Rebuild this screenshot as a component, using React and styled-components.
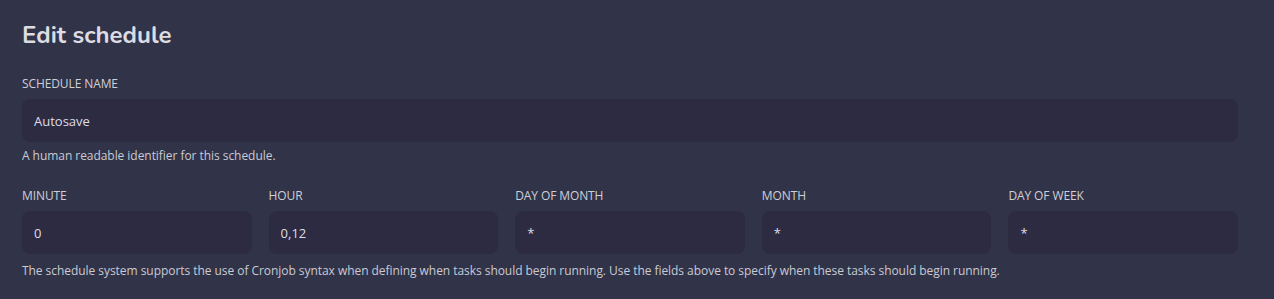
import React, { useState } from 'react';
import styled, { createGlobalStyle } from 'styled-components';

const GlobalStyle = createGlobalStyle`
  html, body {
    margin: 0;
    background: #313348;
  }
  body {
    font-family: "Open Sans", "Noto Sans", sans-serif;
    color: #d6d6de;
  }
`;

const fieldsInit = [
  { key: 'minute', label: 'MINUTE', value: '0' },
  { key: 'hour', label: 'HOUR', value: '0,12' },
  { key: 'dom', label: 'DAY OF MONTH', value: '*' },
  { key: 'month', label: 'MONTH', value: '*' },
  { key: 'dow', label: 'DAY OF WEEK', value: '*' },
];

const App = () => {
  const [name, setName] = useState('Autosave');
  const [cron, setCron] = useState(fieldsInit);

  const onCronChange = (key, value) => {
    setCron(cron.map((f) => (f.key === key ? { ...f, value } : f)));
  };

  return (
    <Page>
      <GlobalStyle />
      <Title>Edit schedule</Title>

      <Field>
        <Label>SCHEDULE NAME</Label>
        <Input value={name} onChange={(e) => setName(e.target.value)} />
        <Help>A human readable identifier for this schedule.</Help>
      </Field>

      <Field>
        <CronGrid>
          {cron.map((f) => (
            <CronCell key={f.key}>
              <Label>{f.label}</Label>
              <Input value={f.value} onChange={(e) => onCronChange(f.key, e.target.value)} />
            </CronCell>
          ))}
        </CronGrid>
        <Help $gap={9}>
          The schedule system supports the use of Cronjob syntax when defining when tasks should begin running. Use the fields above to specify when these tasks should begin running.
        </Help>
      </Field>
    </Page>
  );
};

export default App;

const Page = styled.div`
  display: flex;
  flex-direction: column;
  padding: 20px 36px 20px 22px;
  height: 299px;
  box-sizing: border-box;
`;

const Title = styled.h2`
  margin: 0 0 26px 0;
  font-family: "Nunito", "Lato", "Open Sans", sans-serif;
  font-weight: 700;
  font-size: 24px;
  line-height: 30px;
  color: #dcdce2;
`;

const Field = styled.div`
  display: flex;
  flex-direction: column;
  margin-bottom: 24px;
`;

const Label = styled.div`
  font-size: 12px;
  line-height: 16px;
  color: #cfcfd8;
  margin-bottom: 7px;
  letter-spacing: -0.1px;
`;

const Input = styled.input`
  box-sizing: border-box;
  width: 100%;
  height: 43px;
  padding: 0 12px;
  border: none;
  outline: none;
  border-radius: 8px;
  background: #2d2b42;
  color: #dedee6;
  font-family: "Open Sans", "Noto Sans", sans-serif;
  font-size: 13px;
`;

const Help = styled.div`
  margin-top: ${(p) => p.$gap || 6}px;
  font-size: 12px;
  line-height: 16px;
  color: #cacad4;
  letter-spacing: -0.05px;
`;

const CronGrid = styled.div`
  display: grid;
  grid-template-columns: repeat(5, 1fr);
  column-gap: 17px;
`;

const CronCell = styled.div`
  display: flex;
  flex-direction: column;
`;
